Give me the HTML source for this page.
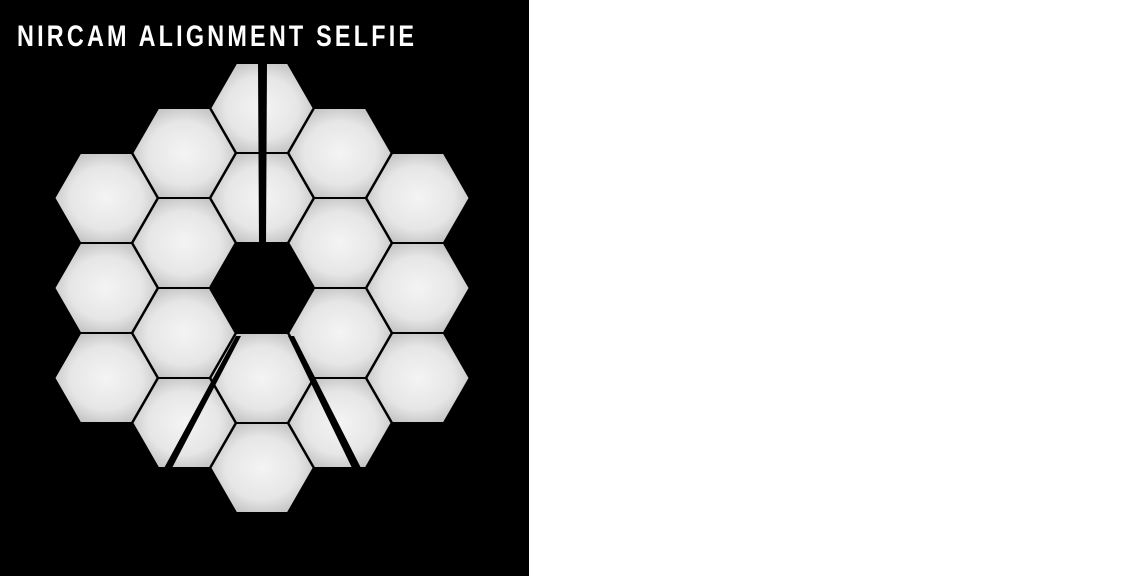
<!DOCTYPE html>
<html><head><meta charset="utf-8"><style>
html,body{margin:0;padding:0;background:#fff;width:1122px;height:576px;overflow:hidden}
</style></head><body>
<svg width="1122" height="576" viewBox="0 0 1122 576" xmlns="http://www.w3.org/2000/svg">
<defs>
<radialGradient id="g" cx="50%" cy="50%" r="55%">
<stop offset="0" stop-color="#f4f4f4"/>
<stop offset="0.65" stop-color="#e6e6e6"/>
<stop offset="1" stop-color="#c4c4c4"/>
</radialGradient>
<polygon id="h" points="-50.5,0 -25.2,-44 25.2,-44 50.5,0 25.2,44 -25.2,44" fill="url(#g)"/>
</defs>
<rect x="0" y="0" width="529" height="576" fill="#000"/>
<g transform="translate(17,46) scale(0.78,1)">
<text x="0" y="0" font-family="Liberation Sans, sans-serif" font-weight="bold" font-size="30" fill="#fff" textLength="509" lengthAdjust="spacing">NIRCAM ALIGNMENT SELFIE</text>
</g>
<use href="#h" x="106" y="198"/><use href="#h" x="106" y="288"/><use href="#h" x="106" y="378"/>
<use href="#h" x="184" y="153"/><use href="#h" x="184" y="243"/><use href="#h" x="184" y="333"/><use href="#h" x="184" y="423"/>
<use href="#h" x="262" y="108"/><use href="#h" x="262" y="198"/><use href="#h" x="262" y="378"/><use href="#h" x="262" y="468"/>
<use href="#h" x="340" y="153"/><use href="#h" x="340" y="243"/><use href="#h" x="340" y="333"/><use href="#h" x="340" y="423"/>
<use href="#h" x="418" y="198"/><use href="#h" x="418" y="288"/><use href="#h" x="418" y="378"/>
<polygon points="258,62 267,62 266,243 259,243" fill="#000"/>
<polygon points="236,336 241,336 172,468 163,470" fill="#000"/>
<polygon points="288,336 294,336 362,470 353,470" fill="#000"/>
</svg>
</body></html>
